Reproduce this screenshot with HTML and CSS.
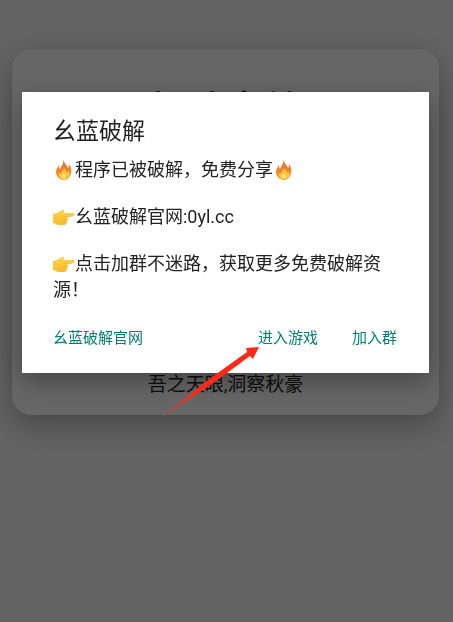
FILE: index.html
```
<!DOCTYPE html>
<html lang="zh-CN">
<head>
    <meta charset="UTF-8">
    <meta name="viewport" content="width=device-width, initial-scale=1.0">
    <title>幺蓝破解</title>
    <link rel="stylesheet" href="styles.css">
</head>
<body>
    <main class="card">
        <h1>极致音效</h1>
        <p class="slogan">吾之天眼,洞察秋豪</p>
    </main>

    <div class="overlay">
        <div class="dialog" role="dialog" aria-labelledby="dialogTitle">
            <h2 id="dialogTitle">幺蓝破解</h2>
            <p><svg class="emoji" viewBox="0 0 22 22" role="img" aria-label="火"><use href="#fire"/></svg>程序已被破解，免费分享<svg class="emoji" viewBox="0 0 22 22" role="img" aria-label="火"><use href="#fire"/></svg></p>
            <p><svg class="emoji" viewBox="0 0 22 22" role="img" aria-label="指向"><use href="#hand"/></svg>幺蓝破解官网:0yl.cc</p>
            <p><svg class="emoji" viewBox="0 0 22 22" role="img" aria-label="指向"><use href="#hand"/></svg>点击加群不迷路，获取更多免费破解资源！</p>
            <div class="actions">
                <button type="button" class="site">幺蓝破解官网</button>
                <button type="button">进入游戏</button>
                <button type="button">加入群</button>
            </div>
            <!-- Arrow pointing at the enter button -->
            <svg class="arrow" viewBox="0 0 100 76" aria-hidden="true">
                <defs>
                    <linearGradient id="arrowFill" gradientUnits="userSpaceOnUse" x1="0" y1="72" x2="40" y2="42">
                        <stop offset="0" stop-color="#ff2a1a" stop-opacity="0.3"/>
                        <stop offset="1" stop-color="#ff2a1a"/>
                    </linearGradient>
                </defs>
                <path fill="url(#arrowFill)" d="M0 72 L48 34 L87 6 L86 2 L99 1 L93 13 L90 10 L52 38 L1 72 Z"/>
            </svg>
        </div>
    </div>

    <svg class="symbols" aria-hidden="true">
        <defs>
            <linearGradient id="flame" x1="0" y1="0" x2="0" y2="1">
                <stop offset="0" stop-color="#dd6f35"/>
                <stop offset="0.6" stop-color="#ee8a2c"/>
                <stop offset="1" stop-color="#f9a825"/>
            </linearGradient>
            <linearGradient id="skin" x1="0" y1="0" x2="0" y2="1">
                <stop offset="0" stop-color="#ffd24a"/>
                <stop offset="1" stop-color="#f8bd2c"/>
            </linearGradient>
            <symbol id="fire" viewBox="0 0 22 22">
                <path fill="url(#flame)" d="M10 1 C11 4 14 6 15 9 C16 8 16 7 16 5 C18 8 19 11 18 14 C17 18 15 21 11 21 C6 21 3 17 3 13 C3 10 5 8 6 6 C6 8 6 9 7 10 C8 7 11 5 10 1 Z"/>
                <path fill="#fbc640" d="M11 9 C12 11 14 12 14 14 C15 14 15 13 15 12 C18 15 16 20 11 20 C7 20 5 17 6 14 C7 15 8 15 8 15 C8 12 11 11 11 9 Z"/>
                <path fill="#ffe680" d="M11 15 C14 17 13 20 11 20 C9 20 8 17 11 15 Z"/>
            </symbol>
            <symbol id="hand" viewBox="0 0 22 22">
                <path fill="url(#skin)" d="M0 8 L4 7 L9 4 C11 3 12 5 10 7 L20 7 C22 7 22 10 20 10 L14 11 C16 12 15 14 14 14 C15 16 14 17 13 17 C13 19 12 19 10 19 L5 19 C3 18 2 17 0 17 Z"/>
                <path fill="none" stroke="#efac28" stroke-width="0.7" stroke-linecap="round" d="M10 11 L19 10 M10 14 L14 14 M10 17 L13 17"/>
            </symbol>
        </defs>
    </svg>
</body>
</html>
```

FILE: styles.css
```
body {
    box-sizing: border-box;
    min-height: 100vh;
    font-family: Roboto, "Noto Sans CJK SC", sans-serif;
    margin: 0;
    padding: 49px 14px 0 12px;
    background-color: #f8f8f8;
    color: #222;
}
h1, h2, p {
    margin: 0;
    font-weight: normal;
}
.card {
    padding: 36px 20px 16px;
    background: white;
    border-radius: 20px;
    box-shadow: 0 10px 32px rgba(0, 0, 0, 0.3);
    text-align: center;
}
.card h1 {
    margin-bottom: 236px;
    font-size: 38px;
    font-weight: 500;
    line-height: 50px;
}
.slogan {
    font-size: 19px;
    line-height: 28px;
}
.overlay {
    position: fixed;
    inset: 0;
    padding: 92px 24px 0 22px;
    background: rgba(0, 0, 0, 0.6);
}
.dialog {
    position: relative;
    padding: 25px 32px 20px 31px;
    background: white;
    box-shadow: 0 8px 24px rgba(0, 0, 0, 0.35);
}
.dialog h2 {
    margin-bottom: 10px;
    font-size: 23px;
    line-height: 30px;
}
.dialog p {
    margin-bottom: 21px;
    font-size: 18px;
    line-height: 26px;
}
.emoji {
    width: 22px;
    height: 22px;
    vertical-align: -5px;
}
.actions {
    display: flex;
    gap: 34px;
    margin-top: -1px;
}
button {
    padding: 0;
    border: none;
    background: none;
    color: #00806f;
    font: 15px/30px Roboto, "Noto Sans CJK SC", sans-serif;
    cursor: pointer;
}
.site {
    margin-right: auto;
}
.arrow {
    position: absolute;
    top: 254px;
    left: 138px;
    width: 100px;
    height: 76px;
    pointer-events: none;
}
.symbols {
    position: absolute;
    width: 0;
    height: 0;
}
```
